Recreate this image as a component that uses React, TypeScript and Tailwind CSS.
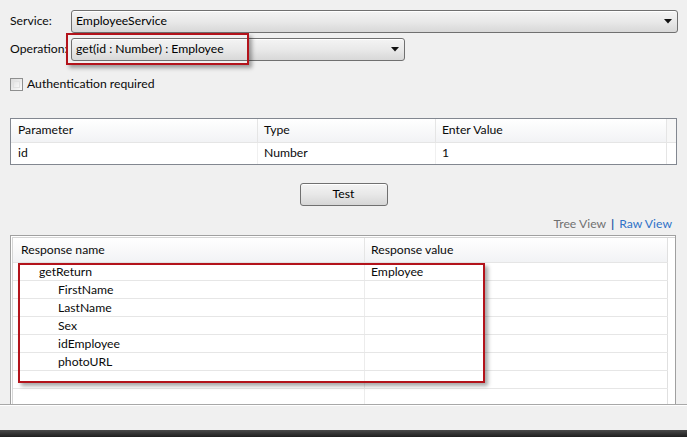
import React from "react";

function Arrow() {
  return (
    <svg width="8" height="5" viewBox="0 0 8 5" className="block">
      <path d="M0 0 H8 L4 4.5 Z" fill="#111" />
    </svg>
  );
}

function Combo({ text, width }: { text: string; width: string }) {
  return (
    <div
      className={`${width} h-[23px] flex items-center justify-between pl-[4px] pr-[5px] rounded-[3px] border border-[#707070] bg-gradient-to-b from-[#f4f4f4] via-[#e9e9e9] to-[#d8d8d8] shadow-[inset_0_1px_0_#ffffff]`}
    >
      <span className="text-[#000]">{text}</span>
      <Arrow />
    </div>
  );
}

const responseRows: { name: string; value: string; indent: string }[] = [
  { name: "getReturn", value: "Employee", indent: "pl-[26px]" },
  { name: "FirstName", value: "", indent: "pl-[45px]" },
  { name: "LastName", value: "", indent: "pl-[45px]" },
  { name: "Sex", value: "", indent: "pl-[45px]" },
  { name: "idEmployee", value: "", indent: "pl-[45px]" },
  { name: "photoURL", value: "", indent: "pl-[45px]" },
  { name: "", value: "", indent: "pl-[45px]" },
];

export default function App() {
  return (
    <div
      className="relative w-[687px] h-[437px] overflow-hidden bg-[#f0f0f0] text-[12.2px] leading-none text-[#0a0a0a] flex flex-col"
      style={{ fontFamily: "Lato, 'Open Sans', sans-serif" }}
    >
      {/* Service */}
      <div className="flex items-center pl-[10px] mt-[10px]">
        <span className="w-[61px]">Service:</span>
        <Combo text="EmployeeService" width="w-[607px]" />
      </div>
      {/* Operation */}
      <div className="flex items-center pl-[10px] mt-[5px]">
        <span className="w-[61px]">Operation:</span>
        <Combo text="get(id : Number) : Employee" width="w-[334px]" />
      </div>
      {/* Checkbox */}
      <div className="flex items-center pl-[10px] mt-[17px] gap-[4px]">
        <div className="w-[13px] h-[13px] border border-[#8e8f8f] bg-gradient-to-br from-[#dcdcdc] to-[#fbfbfb] p-[2px]">
          <div className="w-full h-full border border-[#e2e2e2] bg-gradient-to-br from-[#e6e6e6] to-[#f7f7f7]" />
        </div>
        <span>Authentication required</span>
      </div>

      {/* Parameter table */}
      <div className="ml-[10px] mt-[27px] w-[667px] h-[47px] border border-[#828790] bg-white flex flex-col">
        <div className="h-[24px] flex border-b border-[#e5e5e5] bg-gradient-to-b from-[#ffffff] to-[#f2f3f5]">
          <div className="w-[247px] pl-[7px] flex items-center border-r border-[#e5e5e5]">Parameter</div>
          <div className="w-[178px] pl-[6px] flex items-center border-r border-[#e5e5e5]">Type</div>
          <div className="w-[231px] pl-[6px] flex items-center border-r border-[#e5e5e5]">Enter Value</div>
          <div className="flex-1 bg-[#f7f7f7]" />
        </div>
        <div className="flex-1 flex">
          <div className="w-[247px] pl-[7px] flex items-center border-r border-[#f0f0f0]">id</div>
          <div className="w-[178px] pl-[6px] flex items-center border-r border-[#f0f0f0]">Number</div>
          <div className="w-[231px] pl-[6px] flex items-center border-r border-[#e5e5e5]">1</div>
          <div className="flex-1" />
        </div>
      </div>

      {/* Test button */}
      <div className="flex justify-center mt-[18px]">
        <div className="w-[88px] h-[23px] rounded-[3px] border border-[#707070] bg-gradient-to-b from-[#f3f3f3] via-[#e8e8e8] to-[#d6d6d6] shadow-[inset_0_1px_0_#ffffff] flex items-center justify-center text-[#000]">
          Test
        </div>
      </div>

      {/* View links */}
      <div className="flex justify-end items-center pr-[15px] mt-[12px] gap-[5px] text-[12.2px]">
        <span className="text-[#707070]">Tree View</span>
        <span className="text-[#2a5aa8] font-bold">|</span>
        <span className="text-[#2f73c8]">Raw View</span>
      </div>

      {/* Response table */}
      <div className="ml-[10px] mt-[5px] w-[666px] h-[169px] border border-[#a0a0a0] border-b-0 bg-white pl-[1px] pt-[1px]">
        <div className="h-full border-l border-t border-[#d5d5d5] flex flex-col pr-[7px]">
          <div className="h-[25px] flex border-b border-[#e5e5e5] bg-gradient-to-b from-[#ffffff] to-[#f2f3f5]">
            <div className="w-[352px] pl-[8px] flex items-center border-r border-[#e5e5e5]">Response name</div>
            <div className="flex-1 pl-[6px] flex items-center border-r border-[#e0e0e0]">Response value</div>
          </div>
          {responseRows.map((r, i) => (
            <div key={i} className="h-[18px] flex border-b border-[#e6e6e6] shrink-0">
              <div className={`w-[352px] ${r.indent} flex items-center border-r border-[#ececec]`}>{r.name}</div>
              <div className="flex-1 pl-[6px] flex items-center border-r border-[#e0e0e0]">{r.value}</div>
            </div>
          ))}
          <div className="flex-1 flex">
            <div className="w-[352px] border-r border-[#ececec]" />
            <div className="flex-1 border-r border-[#e0e0e0]" />
          </div>
        </div>
      </div>

      {/* Bottom separator + footer */}
      <div className="h-[1px] bg-[#a8a8a8]" />
      <div className="flex-1 bg-[#f0f0f0] border-t border-[#ffffff]" />
      <div className="h-[7px] bg-gradient-to-b from-[#4a4a4a] to-[#1f1f1f]" />

      {/* Annotation boxes */}
      <div className="absolute left-[66px] top-[33px] w-[183px] h-[32px] border-2 border-[#b3131b] shadow-[3px_3px_4px_rgba(0,0,0,0.35)]" />
      <div className="absolute left-[18px] top-[263px] w-[467px] h-[120px] border-2 border-[#b3131b] shadow-[3px_3px_4px_rgba(0,0,0,0.35)]" />
    </div>
  );
}
